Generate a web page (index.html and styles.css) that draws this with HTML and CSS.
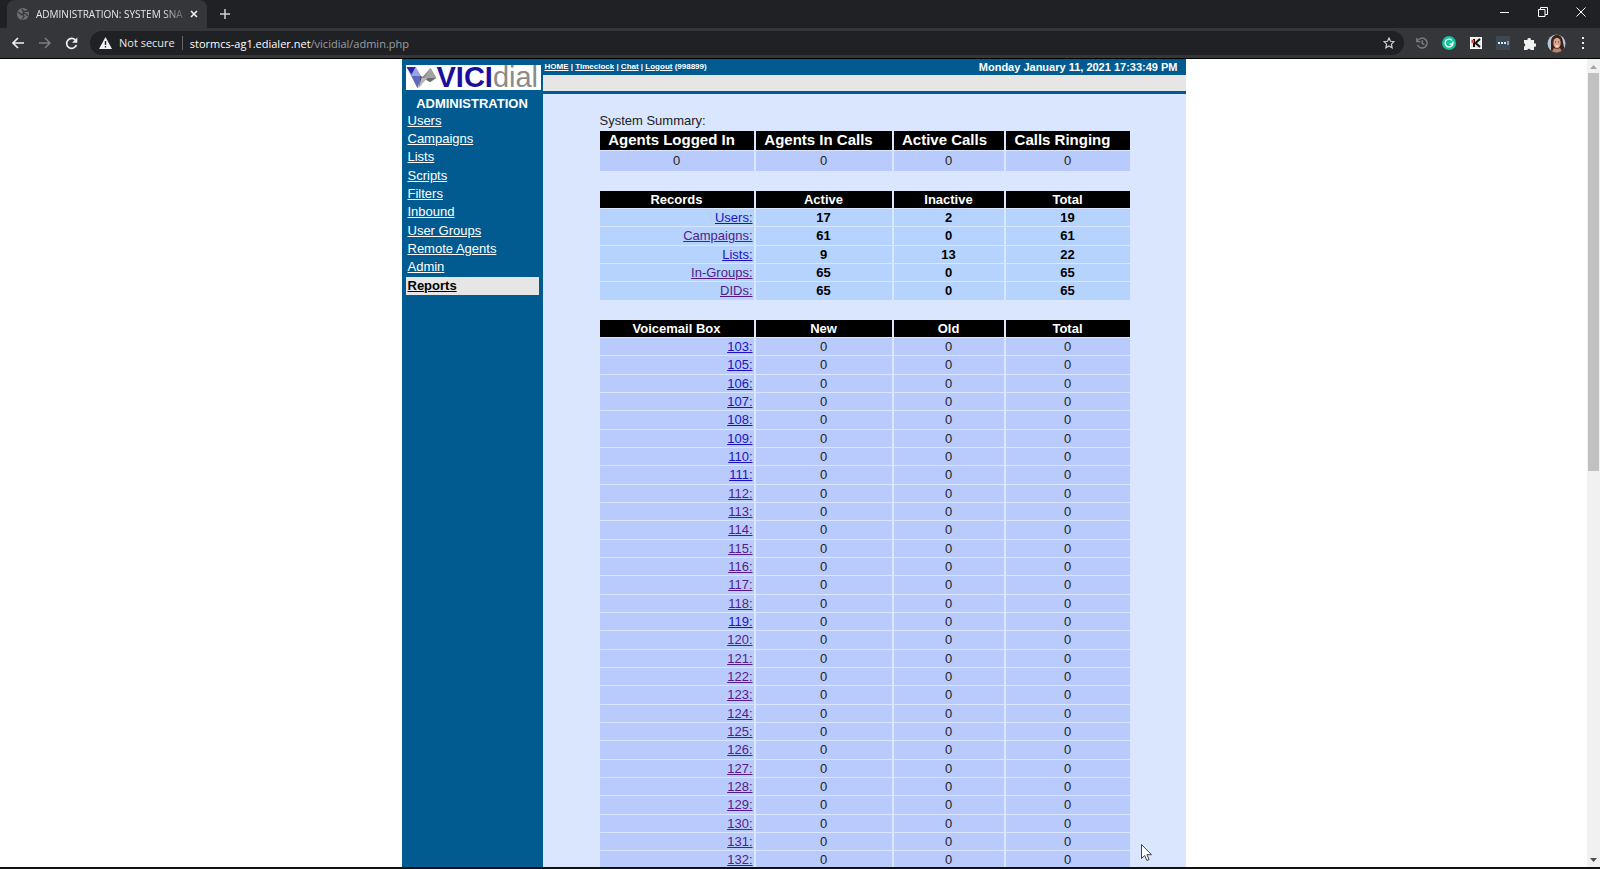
FILE: index.html
```html
<!DOCTYPE html>
<html lang="en">
<head>
  <meta charset="UTF-8">
  <title>ADMINISTRATION: SYSTEM SNAPSHOT STATS</title>
  <link rel="stylesheet" href="styles.css">
</head>
<body>
  <!-- Browser -->
  <div class="tabstrip">
    <div class="tab">
      <svg class="globe" width="12" height="12" viewBox="0 0 12 12"><circle cx="6" cy="6" r="6" fill="#6d7074"/><path d="M1 4l3 2.500h2l1 2-2 3M5 1l1 2 2 .5 3-.5M7 3.500L6 5l3 1 2 2" fill="none" stroke="#35363a" stroke-width="1.300"/></svg>
      <span class="tab-title">ADMINISTRATION: SYSTEM SNA</span>
      <button class="tab-close" aria-label="Close tab"><svg width="8" height="8" viewBox="0 0 8 8"><path d="M1 1l6 6M7 1L1 7" stroke="#f1f1f1" stroke-width="1.600"/></svg></button>
    </div>
    <button class="new-tab" aria-label="New tab"><svg width="10" height="10" viewBox="0 0 10 10"><path d="M5 0v10M0 5h10" stroke="#d0d0d2" stroke-width="1.500"/></svg></button>
    <div class="window-buttons">
      <button aria-label="Minimize"><svg width="10" height="10" viewBox="0 0 10 10"><path d="M0 5.500h9" stroke="#fff"/></svg></button>
      <button aria-label="Restore"><svg width="10" height="10" viewBox="0 0 10 10"><path d="M.5 2.500h6.500v7H.5zM2.500 2.500v-2h7v7H7" fill="none" stroke="#fff"/></svg></button>
      <button aria-label="Close"><svg width="10" height="10" viewBox="0 0 10 10"><path d="M.5.5l9 9M9.500.5l-9 9" stroke="#fff"/></svg></button>
    </div>
  </div>
  <div class="toolbar">
    <button aria-label="Back"><svg width="12" height="12" viewBox="0 0 12 12"><path d="M12 6H1M6 1L1 6l5 5" fill="none" stroke="#f1f1f1" stroke-width="1.600"/></svg></button>
    <button aria-label="Forward"><svg width="12" height="12" viewBox="0 0 12 12"><path d="M0 6h11M6 1l5 5-5 5" fill="none" stroke="#7d7e81" stroke-width="1.500"/></svg></button>
    <button aria-label="Reload"><svg width="13" height="13" viewBox="0 0 13 13"><path d="M10.500 3.200A5 5 0 1 0 11.400 8" fill="none" stroke="#f1f1f1" stroke-width="1.700"/><path d="M12.300.5v5.200H7.100z" fill="#f1f1f1"/></svg></button>
    <div class="omnibox">
      <svg width="13" height="12" viewBox="0 0 13 12"><path d="M6.500 0L13 12H0z" fill="#f1f1f1"/><path d="M6.500 4v4M6.500 9v1.500" stroke="#202124" stroke-width="1.400"/></svg>
      <span class="not-secure">Not secure</span>
      <span class="url"><b>stormcs-ag1.edialer.net</b>/vicidial/admin.php</span>
      <button aria-label="Bookmark"><svg width="12" height="12" viewBox="0 0 12 12"><path d="M6 1l1.500 3.300 3.500.4-2.600 2.400.7 3.600L6 8.900l-3.100 1.800.7-3.600L1 4.700l3.500-.4z" fill="none" stroke="#d0d0d2" stroke-width="1.200"/></svg></button>
    </div>
    <div class="extensions">
      <button aria-label="History"><svg width="12" height="12" viewBox="0 0 12 12"><path d="M1.800 3.500A5 5 0 1 1 1.500 8M.8 1v3.600h3.600M6.200 3.200v3.200l2.300 1.300" fill="none" stroke="#7d7e81" stroke-width="1.400"/></svg></button>
      <button aria-label="Grammar"><svg width="14" height="14" viewBox="0 0 14 14"><circle cx="7" cy="7" r="7" fill="#15c39a"/><path d="M9.900 4.400A3.900 3.900 0 1 0 10.800 8H7.500M10.900 5.600V8l-1 2" fill="none" stroke="#fff" stroke-width="1.300"/></svg></button>
      <button aria-label="K extension"><svg width="12" height="12" viewBox="0 0 12 12"><path d="M0 0h12v12H0z" fill="#fff"/><path d="M1 1h10v10H1z" fill="#e8e8e8"/><path d="M4 2v8M10 2L5.500 6l4.500 4" fill="none" stroke="#111" stroke-width="2"/><path d="M1.500 3h2.500v3H1.500z" fill="#e8432e"/></svg></button>
      <button aria-label="Passwords"><svg width="14" height="14" viewBox="0 0 14 14"><path d="M0 0h14v14H0z" fill="#3b4856"/><path d="M2 6h2v2H2zM5 6h2v2H5zM8 6h2v2H8zM11.500 5h1v4h-1z" fill="#dfe6ec"/></svg></button>
      <button aria-label="Extensions"><svg width="13" height="13" viewBox="0 0 13 13"><path d="M1 3h3.500a1.700 1.700 0 1 1 3.300 0H11v3.400a1.700 1.700 0 1 1 0 3.300V13H7.600a1.700 1.700 0 0 0-3.300 0H1V9.600a1.700 1.700 0 0 0 0-3.300z" fill="#f1f1f1"/></svg></button>
      <button aria-label="Profile"><svg width="19" height="19" viewBox="0 0 19 19"><clipPath id="face"><circle cx="9.500" cy="9.500" r="9"/></clipPath><g clip-path="url(#face)"><path d="M0 0h19v19H0z" fill="#bcc5d3"/><path d="M4 19V7c1-8 11-9 12 1l2 11z" fill="#3a201e"/><ellipse cx="10" cy="9" rx="3.700" ry="5.200" fill="#dda489"/><path d="M4 19l3-5 3 1 3-1 3 5z" fill="#b98370"/><path d="M8 11.500h4l-2 1.500z" fill="#fff"/><path d="M8 8h1M11 8h1" stroke="#4a2822"/></g></svg></button>
      <button aria-label="Menu"><svg width="4" height="12" viewBox="0 0 4 12"><path d="M1 0h2v2H1zM1 5h2v2H1zM1 10h2v2H1z" fill="#f1f1f1"/></svg></button>
    </div>
  </div>

  <div class="viewport">
    <div class="page">
      <div class="admin">
        <nav class="sidebar">
          <a class="logo" href="#" aria-label="VICIdial">
            <svg width="31" height="23" viewBox="0 0 30 23"><path d="M0 1h9l6 10-4 11z" fill="#6f7dc8"/><path d="M0 1h9L5 8z" fill="#2a1fa8"/><path d="M9 1l5 9H5z" fill="#97a3ea"/><path d="M5 10h9l-3 12z" fill="#6069b5"/><path d="M14 10l5 2-7 10z" fill="#4e4b78"/><path d="M24 2l6 10-6 4-9-4z" fill="#8a8a8a"/><path d="M24 2l5 10H18z" fill="#a3a3a3"/><path d="M18 12h11l-6 4z" fill="#6c6c6c"/><path d="M15 12h6l-9 10z" fill="#b8b8b8"/></svg>
            <span><b>VICI</b>dial</span>
          </a>
          <h1>ADMINISTRATION</h1>
          <ul>
            <li><a href="#">Users</a></li>
            <li><a href="#">Campaigns</a></li>
            <li><a href="#">Lists</a></li>
            <li><a href="#">Scripts</a></li>
            <li><a href="#">Filters</a></li>
            <li><a href="#">Inbound</a></li>
            <li><a href="#">User Groups</a></li>
            <li><a href="#">Remote Agents</a></li>
            <li><a href="#">Admin</a></li>
            <li class="current"><a href="#">Reports</a></li>
          </ul>
        </nav>

        <main>
          <div class="topbar">
            <div><a href="#">HOME</a> | <a href="#">Timeclock</a> | <a href="#">Chat</a> | <a href="#">Logout</a> (998899)</div>
            <div class="date">Monday January 11, 2021 17:33:49 PM</div>
          </div>
          <div class="subbar"></div>

          <div class="content">
            <p>System Summary:</p>
            <table class="agents">
              <thead>
                <tr><th class="c1">Agents Logged In</th><th class="c2">Agents In Calls</th><th class="c3">Active Calls</th><th>Calls Ringing</th></tr>
              </thead>
              <tbody>
                <tr><td>0</td><td>0</td><td>0</td><td>0</td></tr>
              </tbody>
            </table>

            <table class="records">
              <thead>
                <tr><th class="c1">Records</th><th class="c2">Active</th><th class="c3">Inactive</th><th>Total</th></tr>
              </thead>
              <tbody>
                <tr><td><a href="#">Users:</a></td><td>17</td><td>2</td><td>19</td></tr>
                <tr><td><a class="seen" href="#">Campaigns:</a></td><td>61</td><td>0</td><td>61</td></tr>
                <tr><td><a href="#">Lists:</a></td><td>9</td><td>13</td><td>22</td></tr>
                <tr><td><a class="seen" href="#">In-Groups:</a></td><td>65</td><td>0</td><td>65</td></tr>
                <tr><td><a class="seen" href="#">DIDs:</a></td><td>65</td><td>0</td><td>65</td></tr>
              </tbody>
            </table>

            <table class="voicemail">
              <thead>
                <tr><th class="c1">Voicemail Box</th><th class="c2">New</th><th class="c3">Old</th><th>Total</th></tr>
              </thead>
              <tbody id="boxes"></tbody>
            </table>
          </div>
        </main>
      </div>
    </div>
    <div class="scrollbar">
      <svg width="7" height="4" viewBox="0 0 7 4"><path d="M0 4l3.500-4L7 4z" fill="#a3a3a3"/></svg>
      <div class="track"><div class="thumb"></div></div>
      <svg width="7" height="4" viewBox="0 0 7 4"><path d="M0 0h7L3.500 4z" fill="#505050"/></svg>
    </div>
  </div>
  <div class="taskbar"></div>

  <svg class="cursor" width="12" height="18" viewBox="0 0 12 18"><path d="M.5.5v14l3.200-3 2.200 5 2.200-1-2.200-4.800h4.600z" fill="#fff" stroke="#444"/></svg>

  <script>
    const unvisited = [103, 105, 106, 107, 108, 109, 110, 111, 119];
    let rows = '';
    for (let box = 103; box <= 132; box++) {
      if (box === 104) continue;
      const seen = unvisited.includes(box) ? '' : ' class="seen"';
      rows += `<tr><td><a${seen} href="#">${box}:</a></td><td>0</td><td>0</td><td>0</td></tr>`;
    }
    document.getElementById('boxes').innerHTML = rows;
  </script>
</body>
</html>
```
FILE: styles.css
```css
* {
  box-sizing: border-box;
}
body {
  margin: 0;
  height: 100vh;
  display: flex;
  flex-direction: column;
  overflow: hidden;
  font-family: "Liberation Sans", Arial, sans-serif;
  font-size: 13px;
  background: white;
}
button {
  display: flex;
  align-items: center;
  justify-content: center;
  padding: 0;
  border: none;
  background: none;
}

/* browser */
.tabstrip {
  flex: none;
  display: flex;
  height: 28px;
  padding-left: 7px;
  background: #202124;
  font-family: "Open Sans", sans-serif;
}
.tab {
  display: flex;
  align-items: center;
  width: 200px;
  padding: 0 9px 0 10px;
  background: #35363a;
  border-radius: 8px 8px 0 0;
}
.tab-title {
  flex: 1;
  margin-left: 7px;
  white-space: nowrap;
  color: #e8e8ea;
  font-size: 10px;
  mask-image: linear-gradient(to right, black 82%, transparent);
}
.globe {
  flex: none;
}
.new-tab {
  width: 36px;
}
.window-buttons {
  display: flex;
  margin-left: auto;
}
.window-buttons button {
  width: 38px;
  padding-bottom: 4px;
}
.toolbar {
  flex: none;
  display: flex;
  align-items: center;
  height: 31px;
  padding: 0 4px;
  background: #35363a;
  border-bottom: 1px solid black;
  font-family: "Open Sans", sans-serif;
}
.toolbar > button {
  width: 27px;
}
.omnibox {
  flex: 1;
  display: flex;
  align-items: center;
  height: 24px;
  margin-left: 5px;
  padding: 0 9px;
  border-radius: 12px;
  background: #202124;
  color: #e8e8ea;
  font-size: 11px;
}
.not-secure {
  margin-left: 7px;
  padding-right: 7px;
  line-height: 14px;
  border-right: 1px solid #5f6368;
}
.url {
  flex: 1;
  margin-left: 7px;
  color: #9aa0a6;
}
.url b {
  color: #fff;
  font-weight: normal;
}
.extensions {
  display: flex;
  margin-left: 4px;
}
.extensions button {
  width: 27px;
}
.extensions button:last-child {
  width: 26px;
}
.viewport {
  flex: 1;
  display: flex;
  min-height: 0;
}
.page {
  flex: 1;
  overflow: hidden;
}
.scrollbar {
  display: flex;
  flex-direction: column;
  align-items: center;
  width: 13px;
  padding: 6px 0 5px;
  background: #f1f1f1;
}
.track {
  flex: 1;
  width: 11px;
  margin: 4px 0;
}
.thumb {
  height: 51%;
  background: #c1c1c1;
}
.taskbar {
  flex: none;
  height: 2px;
  background: #111;
}
.cursor {
  position: absolute;
  left: 1141px;
  top: 844px;
}

/* admin page */
.admin {
  display: flex;
  width: 784px;
  min-height: 100%;
  margin: 0 auto;
}
.sidebar {
  flex: none;
  width: 141px;
  padding: 6px 4px 0;
  background: #015b91;
}
.logo {
  display: flex;
  align-items: center;
  height: 25px;
  margin-right: -2px;
  background: #fff;
  color: #8b8b8b;
  font-size: 29px;
  line-height: 25px;
  text-decoration: none;
}
.logo b {
  color: #1a0f9c;
}
.sidebar h1 {
  margin: 5px 0 0;
  color: #fff;
  font-size: 13px;
  line-height: 17px;
  text-align: center;
}
.sidebar ul {
  margin: 0;
  padding: 0;
  list-style: none;
}
.sidebar li {
  height: 18px;
  padding-left: 2px;
  line-height: 18px;
}
.sidebar li:nth-child(3n) {
  height: 19px;
}
.sidebar .current {
  background: #e6e6e6;
  font-weight: bold;
}
.sidebar li a {
  color: #fff;
}
.sidebar .current a {
  color: #000;
}
main {
  flex: 1;
  background: #d9e6fe;
}
.topbar {
  display: flex;
  justify-content: space-between;
  height: 16px;
  padding: 0 8px 0 2px;
  background: #015b91;
  color: #fff;
  font-size: 8px;
  font-weight: bold;
  line-height: 16px;
}
.topbar a {
  color: #fff;
}
.date {
  font-size: 11px;
}
.subbar {
  height: 19px;
  background: #e6e6e6;
  border-bottom: 3px solid #015b91;
}
.content {
  padding: 17px 54px 0 57px;
}
.content p {
  margin: 0;
  padding-bottom: 1px;
  line-height: 19px;
  color: #222;
}
table {
  width: 100%;
  table-layout: fixed;
  border-collapse: separate;
  border-spacing: 0;
  margin-bottom: 19px;
}
th, td {
  height: 18px;
  padding: 0;
  line-height: 16px;
  text-align: center;
  border-right: 2px solid #d9e6fe;
  border-bottom: 1px solid #d9e6fe;
}
th {
  background: #000;
  color: #fff;
}
.c1 {
  width: 156px;
}
.c2 {
  width: 138px;
}
.c3 {
  width: 112px;
}
.agents th {
  height: 20px;
  padding: 0 10px 2px 0;
  font-size: 15px;
}
.agents th.c3 {
  padding-right: 8px;
}
.agents td {
  height: 21px;
}
td {
  background: #b9cbfd;
  color: #222;
}
.records td {
  background: #b5d3fc;
  color: #000;
  font-weight: bold;
}
tbody tr:nth-child(3n+2) td {
  height: 19px;
}
.records td:first-child, .voicemail td:first-child {
  padding-right: 1px;
  text-align: right;
  font-weight: normal;
}
td a {
  color: #1c12c4;
}
td a.seen {
  color: #551a8b;
}
```
